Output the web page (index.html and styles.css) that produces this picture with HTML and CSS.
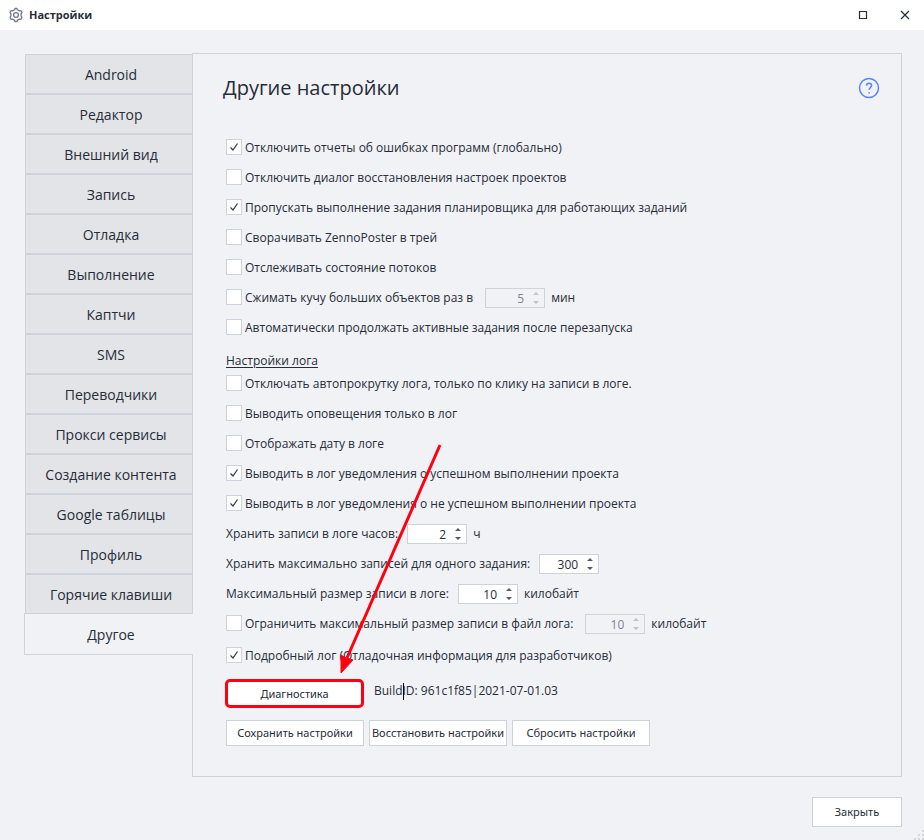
FILE: index.html
```
<!DOCTYPE html>
<html lang="ru">
<head>
<meta charset="utf-8">
<title>Настройки</title>
<link rel="stylesheet" href="styles.css">
</head>
<body>
<svg class="defs" width="0" height="0" aria-hidden="true">
  <symbol id="arrows" viewBox="0 0 6 14"><path d="M0 4L3 1L6 4Z M0 10L3 13L6 10Z" fill="currentColor"/></symbol>
</svg>
<header class="titlebar">
  <svg class="gear" viewBox="0 0 16 16" width="16" height="16" aria-hidden="true">
    <path d="M6.4 2.9L7 1.5H9L9.6 2.9L11.2 3.8L12.8 3.6L14 5.4L13.1 6.9V9L14 10.5L12.8 12.4L11.2 12.2L9.6 13.1L9 14.5H7L6.4 13.1L4.8 12.2L3.2 12.4L2 10.5L2.9 9V6.9L2 5.4L3.2 3.6L4.8 3.8Z"/>
    <circle cx="8" cy="8" r="2.4"/>
  </svg>
  <h1 class="title">Настройки</h1>
  <button class="winbtn" type="button" aria-label="Развернуть"><svg viewBox="0 0 10 10" width="10" height="10"><path d="M1.5 1.5H8.5V8.5H1.5Z"/></svg></button>
  <button class="winbtn" type="button" aria-label="Закрыть окно"><svg viewBox="0 0 10 10" width="10" height="10"><path d="M1 1L9 9M9 1L1 9"/></svg></button>
</header>
<main class="window">
  <div class="body">
    <nav class="tabs">
      <button class="tab" type="button">Android</button>
      <button class="tab" type="button">Редактор</button>
      <button class="tab" type="button">Внешний вид</button>
      <button class="tab" type="button">Запись</button>
      <button class="tab" type="button">Отладка</button>
      <button class="tab" type="button">Выполнение</button>
      <button class="tab" type="button">Каптчи</button>
      <button class="tab" type="button">SMS</button>
      <button class="tab" type="button">Переводчики</button>
      <button class="tab" type="button">Прокси сервисы</button>
      <button class="tab" type="button">Создание контента</button>
      <button class="tab" type="button">Google таблицы</button>
      <button class="tab" type="button">Профиль</button>
      <button class="tab" type="button">Горячие клавиши</button>
      <button class="tab active" type="button">Другое</button>
    </nav>
    <section class="panel">
      <div class="head">
        <h2 class="heading">Другие настройки</h2>
        <button class="help" type="button" aria-label="Справка">
          <svg viewBox="0 0 22 22" width="22" height="22"><circle cx="11" cy="11" r="9.5"/><path d="M8.5 8.8C8.5 7.2 9.5 6.3 11 6.3S13.6 7.2 13.6 8.6C13.6 10.4 11.1 10.6 11.1 12.8M11.1 15V16.4"/></svg>
        </button>
      </div>
      <form class="form">
        <div class="row"><input class="check" type="checkbox" id="c1" checked><label for="c1">Отключить отчеты об ошибках программ (глобально)</label></div>
        <div class="row"><input class="check" type="checkbox" id="c2"><label for="c2">Отключить диалог восстановления настроек проектов</label></div>
        <div class="row"><input class="check" type="checkbox" id="c3" checked><label for="c3">Пропускать выполнение задания планировщика для работающих заданий</label></div>
        <div class="row"><input class="check" type="checkbox" id="c4"><label for="c4">Сворачивать ZennoPoster в трей</label></div>
        <div class="row"><input class="check" type="checkbox" id="c5"><label for="c5">Отслеживать состояние потоков</label></div>
        <div class="row"><input class="check" type="checkbox" id="c6"><label for="c6">Сжимать кучу больших объектов раз в</label><span class="spin wide"><input type="number" value="5" aria-label="Минут" disabled><svg width="6" height="14"><use href="#arrows"/></svg></span><span class="unit">мин</span></div>
        <div class="row"><input class="check" type="checkbox" id="c7"><label for="c7">Автоматически продолжать активные задания после перезапуска</label></div>
        <h3 class="sub">Настройки лога</h3>
        <div class="row"><input class="check" type="checkbox" id="c8"><label for="c8">Отключать автопрокрутку лога, только по клику на записи в логе.</label></div>
        <div class="row"><input class="check" type="checkbox" id="c9"><label for="c9">Выводить оповещения только в лог</label></div>
        <div class="row"><input class="check" type="checkbox" id="c10"><label for="c10">Отображать дату в логе</label></div>
        <div class="row"><input class="check" type="checkbox" id="c11" checked><label for="c11">Выводить в лог уведомления о успешном выполнении проекта</label></div>
        <div class="row"><input class="check" type="checkbox" id="c12" checked><label for="c12">Выводить в лог уведомления о не успешном выполнении проекта</label></div>
        <div class="row"><label for="n1">Хранить записи в логе часов:</label><span class="spin"><input type="number" id="n1" value="2"><svg width="6" height="14"><use href="#arrows"/></svg></span><span class="unit">ч</span></div>
        <div class="row"><label for="n2">Хранить максимально записей для одного задания:</label><span class="spin"><input type="number" id="n2" value="300"><svg width="6" height="14"><use href="#arrows"/></svg></span></div>
        <div class="row"><label for="n3">Максимальный размер записи в логе:</label><span class="spin"><input type="number" id="n3" value="10"><svg width="6" height="14"><use href="#arrows"/></svg></span><span class="unit">килобайт</span></div>
        <div class="row"><input class="check" type="checkbox" id="c13"><label for="c13">Ограничить максимальный размер записи в файл лога:</label><span class="spin wide"><input type="number" value="10" aria-label="Килобайт" disabled><svg width="6" height="14"><use href="#arrows"/></svg></span><span class="unit">килобайт</span></div>
        <div class="row last"><input class="check" type="checkbox" id="c14" checked><label for="c14">Подробный лог (Отладочная информация для разработчиков)</label></div>
        <div class="diag">
          <button class="btn marked" type="button">Диагностика</button>
          <span class="build">Build<i class="caret"></i>ID: 961c1f85|2021-07-01.03</span>
          <svg class="pointer" viewBox="0 0 108 236" width="108" height="236" aria-hidden="true"><path d="M104 3L11 216" stroke="#ff0010" stroke-width="3"/><path d="M5 231L5 213L10 216L17 218Z" fill="#ff0010" stroke="#ff0010"/></svg>
        </div>
        <div class="actions">
          <button class="btn" type="button">Сохранить настройки</button>
          <button class="btn" type="button">Восстановить настройки</button>
          <button class="btn" type="button">Сбросить настройки</button>
        </div>
      </form>
    </section>
  </div>
  <footer class="footer"><button class="btn close" type="button">Закрыть</button></footer>
  <svg class="grip" viewBox="0 0 10 10" width="10" height="10" aria-hidden="true"><path d="M8 0h2v2h-2zM8 4h2v2h-2zM4 4h2v2h-2zM8 8h2v2h-2zM4 8h2v2h-2zM0 8h2v2h-2z"/></svg>
</main>
</body>
</html>
```
FILE: styles.css
```
* { box-sizing: border-box; }

body {
  margin: 0;
  min-height: 100vh;
  display: flex;
  flex-direction: column;
  background: #f1f2f6;
  color: #262c38;
  font: 12px/16px "Open Sans", "Noto Sans", sans-serif;
}

button, input { font: inherit; color: inherit; }
button { padding: 0; cursor: pointer; }
h1, h2, h3 { margin: 0; font-weight: 400; }
.defs { position: absolute; }

.titlebar {
  display: flex;
  align-items: center;
  height: 30px;
  padding-left: 8px;
  background: #fff;
}
.gear { fill: none; stroke: #70778a; stroke-width: 1.3; stroke-linejoin: round; }
.title { flex: 1; margin-left: 5px; font-size: 11px; font-weight: 700; }
.winbtn {
  display: grid;
  place-items: center;
  width: 42px;
  height: 30px;
  border: 0;
  background: none;
}
.winbtn:last-child { width: 38px; margin-left: 2px; }
.winbtn svg { fill: none; stroke: #262c38; stroke-width: 1.2; }

.window {
  position: relative;
  flex: 1;
  padding: 23px 22px 13px 24px;
}
.body { display: flex; }

.tabs {
  display: flex;
  flex-direction: column;
  width: 168px;
  padding-top: 1px;
}
.tab {
  height: 40px;
  margin-left: 1px;
  padding: 2px 0 0 4px;
  border: 1px solid #cdd2db;
  border-right: 0;
  background: #e3e4e8;
  font-size: 14px;
}
.tab.active {
  position: relative;
  height: 42px;
  margin: -1px -1px 0 0;
  background: #f1f2f6;
}

.panel {
  flex: 1;
  padding: 19px 21px 30px 30px;
  border: 1px solid #cdd2db;
}
.head {
  display: flex;
  align-items: center;
  justify-content: space-between;
  height: 30px;
  margin-bottom: 29px;
}
.heading { font-size: 20px; line-height: 30px; }
.help { height: 22px; border: 0; background: none; }
.help svg { display: block; fill: none; stroke: #5686f5; stroke-width: 1.5; }

.form { margin-left: 3px; }
.row {
  display: flex;
  align-items: center;
  height: 30px;
  white-space: nowrap;
}
.row label, .unit { padding-top: 2px; }
.row.last { margin-top: 2px; }
.sub {
  padding-top: 11px;
  margin-bottom: -1px;
  font-size: 12px;
  text-decoration: underline;
  text-underline-offset: 2px;
}

.check {
  appearance: none;
  width: 16px;
  height: 16px;
  margin: 0 3px 0 0;
  border: 1px solid #cdd2db;
  background: #fff;
}
.check:checked {
  background: #fff url("data:image/svg+xml,%3Csvg xmlns='http://www.w3.org/2000/svg' viewBox='0 0 14 14'%3E%3Cpath d='M3.5 7.5L6 10L10.5 3.5' fill='none' stroke='%23363c48' stroke-width='1.3'/%3E%3C/svg%3E");
}

.spin {
  position: relative;
  display: flex;
  width: 60px;
  height: 20px;
  margin: 2px 6px 0 9px;
}
.spin.wide { margin-left: 12px; }
.spin input {
  appearance: textfield;
  width: 100%;
  padding: 1px 20px 0 0;
  border: 1px solid #cdd2db;
  border-radius: 0;
  background: #fff;
  text-align: right;
}
.spin input::-webkit-inner-spin-button { appearance: none; margin: 0; }
.spin svg { position: absolute; top: 3px; right: 6px; color: #555b66; }
.spin input:disabled { background: #f1f2f6; color: #7d8292; }
.spin input:disabled + svg { color: #bfc1c8; }

.btn {
  flex: 0 0 138px;
  height: 26px;
  border: 1px solid #cdd2db;
  background: #fff;
  font: 11px/16px "Noto Sans", sans-serif;
  white-space: nowrap;
}
.diag {
  position: relative;
  display: flex;
  margin: 9px 0 0 -1px;
}
.btn.marked {
  flex-basis: 139px;
  height: 29px;
  border: 3px solid #ff0010;
  border-radius: 5px;
}
.build { margin: 4px 0 0 10px; }
.caret {
  position: absolute;
  width: 1px;
  height: 17px;
  background: #000;
}
.pointer { position: absolute; left: 111px; bottom: 30px; fill: none; }
.actions {
  display: flex;
  gap: 5px;
  margin-top: 12px;
}

.footer {
  display: flex;
  justify-content: flex-end;
  margin-top: 20px;
}
.btn.close { flex-basis: 90px; height: 30px; }
.grip { position: absolute; right: 0; bottom: 0; fill: #d5d7dd; }
```
